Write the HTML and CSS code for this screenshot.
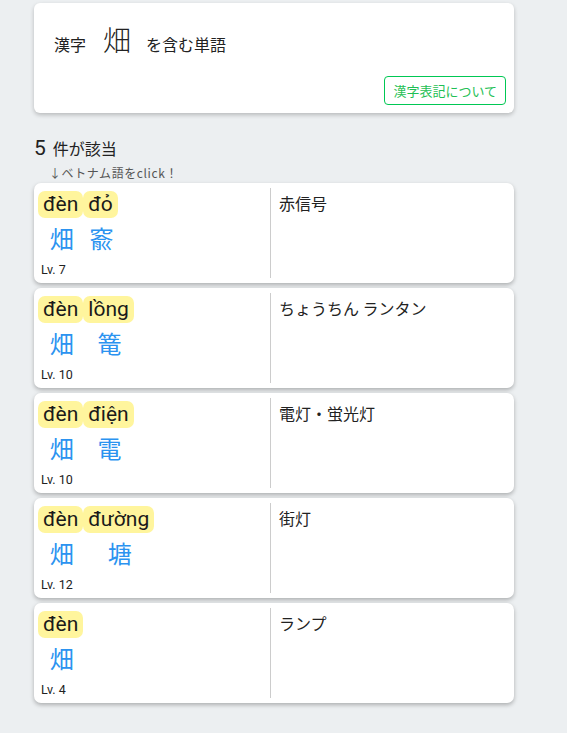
FILE: index.html
```html
<!DOCTYPE html>
<html lang="ja">
<head>
<meta charset="utf-8">
<link rel="stylesheet" href="styles.css">
</head>
<body>
<div class="page">
  <div class="head-card">
    <div class="title"><span class="t-small">漢字</span><span class="t-big">畑</span><span class="t-small">を含む単語</span></div>
    <button class="about">漢字表記について</button>
  </div>
  <div class="count"><span class="num">5</span><span class="count-label">件が該当</span></div>
  <div class="hint">↓ベトナム語をclick！</div>
  <div class="list">
    <div class="card">
      <div class="left">
        <div class="word">
          <div class="syl"><span class="viet">đèn</span><span class="kanji">畑</span></div>
          <div class="syl"><span class="viet">đỏ</span><span class="kanji">窬</span></div>
        </div>
        <div class="lv">Lv. 7</div>
      </div>
      <div class="right">赤信号</div>
    </div>
    <div class="card">
      <div class="left">
        <div class="word">
          <div class="syl"><span class="viet">đèn</span><span class="kanji">畑</span></div>
          <div class="syl"><span class="viet">lồng</span><span class="kanji">篭</span></div>
        </div>
        <div class="lv">Lv. 10</div>
      </div>
      <div class="right">ちょうちん ランタン</div>
    </div>
    <div class="card">
      <div class="left">
        <div class="word">
          <div class="syl"><span class="viet">đèn</span><span class="kanji">畑</span></div>
          <div class="syl"><span class="viet">điện</span><span class="kanji">電</span></div>
        </div>
        <div class="lv">Lv. 10</div>
      </div>
      <div class="right">電灯・蛍光灯</div>
    </div>
    <div class="card">
      <div class="left">
        <div class="word">
          <div class="syl"><span class="viet">đèn</span><span class="kanji">畑</span></div>
          <div class="syl"><span class="viet">đường</span><span class="kanji">塘</span></div>
        </div>
        <div class="lv">Lv. 12</div>
      </div>
      <div class="right">街灯</div>
    </div>
    <div class="card">
      <div class="left">
        <div class="word">
          <div class="syl"><span class="viet">đèn</span><span class="kanji">畑</span></div>
        </div>
        <div class="lv">Lv. 4</div>
      </div>
      <div class="right">ランプ</div>
    </div>
  </div>
</div>
</body>
</html>
```
FILE: styles.css
```css
html, body {
  margin: 0;
  padding: 0;
  background: #eceff1;
}
body {
  font-family: Roboto, "Noto Sans CJK JP", sans-serif;
  color: #222;
  height: 733px;
}
.page {
  margin-left: 34px;
  width: 480px;
  padding-top: 3px;
}
.head-card {
  background: #fff;
  border-radius: 6px;
  box-shadow: 0 2px 4px rgba(0,0,0,0.22);
  height: 110px;
  box-sizing: border-box;
  padding: 8px;
  display: flex;
  flex-direction: column;
}
.title {
  margin-top: 8px;
  padding-left: 12px;
  height: 40px;
  display: flex;
  align-items: baseline;
  font-family: "Noto Sans CJK JP", sans-serif;
}
.t-small {
  font-size: 16px;
}
.t-big {
  font-size: 28px;
  font-weight: 300;
  margin: 0 15px 0 17px;
  line-height: 40px;
}
.about {
  margin-top: auto;
  align-self: flex-end;
  background: #fff;
  border: 1px solid #00c853;
  border-radius: 4px;
  color: #1fbf55;
  font-family: "Noto Sans CJK JP", sans-serif;
  font-size: 13px;
  line-height: 17px;
  padding: 5px 8px;
  height: 29px;
}
.count {
  margin-top: 22px;
  height: 26px;
  display: flex;
  align-items: center;
}
.num {
  font-size: 21px;
  margin-right: 7px;
}
.count-label {
  font-family: "Noto Sans CJK JP", sans-serif;
  font-size: 16px;
}
.hint {
  margin-top: 4px;
  height: 16px;
  line-height: 16px;
  font-size: 12px;
  padding-left: 15px;
  color: #555;
  letter-spacing: 0.6px;
  font-family: "Noto Sans CJK JP", sans-serif;
}
.list {
  margin-top: 2px;
  display: flex;
  flex-direction: column;
  gap: 5px;
}
.card {
  background: #fff;
  border-radius: 7px;
  box-shadow: 0 2px 4px rgba(0,0,0,0.27);
  height: 100px;
  display: flex;
}
.left {
  width: 236px;
  box-sizing: border-box;
  padding: 8px 0 0 4px;
  display: flex;
  flex-direction: column;
}
.word {
  display: flex;
}
.syl {
  display: flex;
  flex-direction: column;
  align-items: center;
}
.viet {
  background: #fff59d;
  border-radius: 7px;
  font-size: 21px;
  line-height: 27px;
  height: 27px;
  padding: 0 5px;
  color: #1a1a1a;
}
.kanji {
  color: #2b93f0;
  font-family: "Noto Sans CJK JP", sans-serif;
  font-size: 24px;
  line-height: 32px;
  margin-top: 4px;
  padding-left: 2px;
}
.lv {
  font-size: 12.5px;
  line-height: 16px;
  margin-top: 8px;
  padding-left: 3px;
}
.right {
  flex: 1;
  border-left: 1px solid #ccc;
  margin: 5px 0;
  padding: 3px 0 0 8px;
  font-family: "Noto Sans CJK JP", sans-serif;
  font-size: 16px;
  line-height: 24px;
}
```
